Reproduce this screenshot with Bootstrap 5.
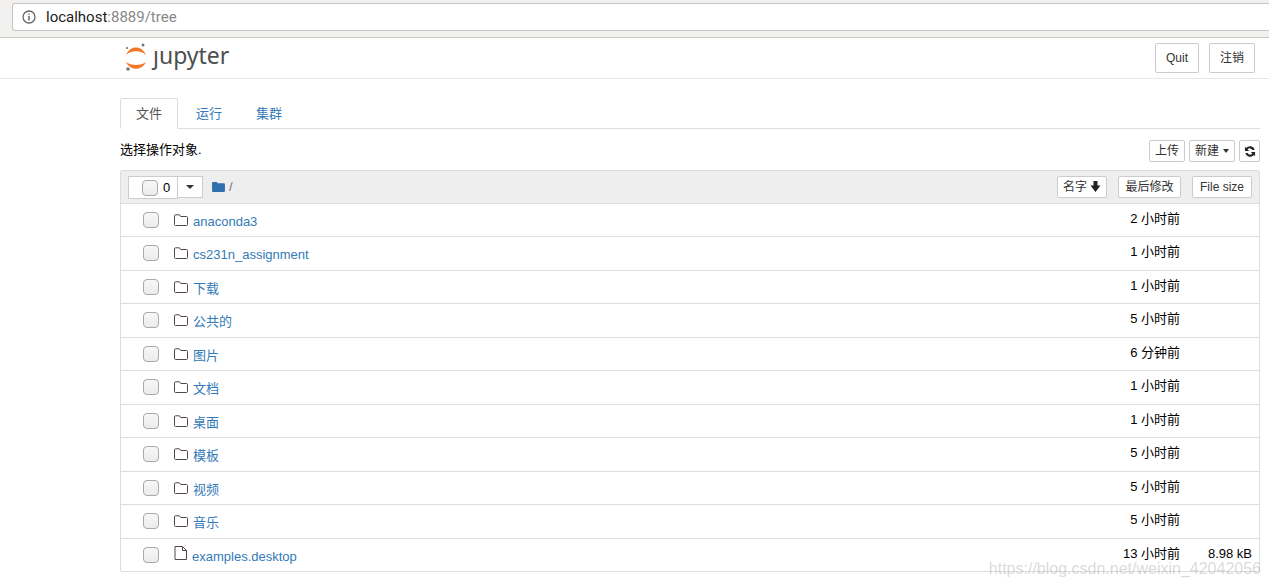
<!DOCTYPE html>
<html lang="en">
<head>
    <meta charset="UTF-8">
    <title>Home</title>
    <link href="https://cdn.jsdelivr.net/npm/bootstrap@5.3.0/dist/css/bootstrap.min.css" rel="stylesheet">
    <style>
        body { font-family: "Liberation Sans", "Noto Sans CJK SC", sans-serif; font-size: 13px; color: #000; overflow: hidden; }
        .chrome-bar { height: 38px; background: #f2f1f0; border-bottom: 1px solid #c9c7c4; padding: 3px 0 6px 12px; }
        .url-box { height: 28px; background: #fff; border: 1px solid #c6c6c6; border-right: 0; border-radius: 3px 0 0 3px; padding-left: 9px; gap: 10px; font-size: 15px; font-family: "Roboto", "Noto Sans", sans-serif; color: #888; }
        .url-box b { font-weight: 400; color: #222; }
        .head-bar { height: 41px; border-bottom: 1px solid #e7e7e7; padding: 0 14px 0 124px; }
        .logo-word { font-family: "Noto Sans", sans-serif; font-size: 23px; line-height: 28px; color: #4e4e4e; margin-left: 5px; margin-top: -6px; }
        .head-btns { gap: 10px; }
        .jp-btn { font-size: 12px; line-height: 18px; padding: 1px 5px; border: 1px solid #ccc; border-radius: 2px; background: #fff; color: #333; height: 22px; white-space: nowrap; }
        .jp-btn:hover { background: #e6e6e6; }
        .head-btn { height: 30px; padding: 5px 10px; }
        .new-btn { gap: 4px; }
        .new-btn .caret-tri { border-left-width: 3.5px; border-right-width: 3.5px; }
        .reload-btn { padding: 0 3.5px; }
        .sort-btn { gap: 3px; }
        .modified-btn { padding: 1px 6.5px; }
        .size-btn { padding: 1px 7px; }
        .page-main { padding: 19px 9px 0 120px; }
        .nav-tabs { border-color: #ddd; --bs-nav-tabs-border-radius: 2px; }
        .nav-tabs .nav-link { padding: 0 15px; line-height: 29px; height: 31px; color: #337ab7; margin-right: 2px; }
        .nav-tabs .nav-link.active { color: #555; border-color: #ddd #ddd #fff; }
        .toolbar-row { height: 41px; padding-top: 11px; }
        .pick-label { margin-top: 1px; line-height: 18px; }
        .list-box { border: 1px solid #ddd; border-radius: 2px; }
        .list-top { height: 32.6px; background: #eee; border-bottom: 1px solid #ddd; padding: 0 7px; }
        .file-row { height: 33.5px; border-bottom: 1px solid #ddd; padding: 0 7px 0 22px; }
        .file-row:last-child { border-bottom: 0; height: 32.4px; }
        .file-row a { color: #337ab7; text-decoration: none; margin-left: 5px; position: relative; top: 1.5px; }
        .row-icon { margin-left: 15px; width: 14px; height: 14px; fill: none; stroke: #54444f; stroke-width: 1; flex: none; }
        .file-icon { margin-top: -3px; }
        .file-row .file-name { margin-left: 4px; }
        .chk { appearance: none; width: 16px; height: 16px; margin: 0; border: 1px solid #a9a9a9; border-radius: 4px; background: linear-gradient(#f7f7f7, #ececec); flex: none; }
        .when { width: 110px; text-align: right; margin-left: auto; position: relative; top: -1.5px; }
        .size { width: 72px; text-align: right; position: relative; top: -1.5px; }
        .count-box { width: 50px; height: 23px; background: #fff; border: 1px solid #ccc; padding-left: 13px; gap: 5px; margin-top: 2px; }
        .count-caret { width: 25px; height: 22px; background: #fff; border: 1px solid #ccc; border-left: 0; }
        .caret-tri { width: 0; height: 0; border-left: 4px solid transparent; border-right: 4px solid transparent; border-top: 4px solid #333; }
        .crumb-folder { margin-left: 9px; }
        .sort-btns { gap: 11px; }
        .wm { position: absolute; right: 8px; bottom: 10px; font-size: 16px; line-height: 1; color: rgba(130,130,130,.3); }
    </style>
</head>
<body>
    <svg width="0" height="0" class="position-absolute">
        <symbol id="ic-folder" viewBox="0 0 14 14"><path d="M1.500 12.500h11a1 1 0 0 0 1-1v-7a1 1 0 0 0-1-1H6.700L5.500 1.800h-4a1 1 0 0 0-1 1v8.700a1 1 0 0 0 1 1z"/></symbol>
        <symbol id="ic-file" viewBox="0 0 14 14"><path d="M1 .5h7.500l4 4v9H1zM8.500 .5v4h4"/></symbol>
    </svg>

    <div class="chrome-bar">
        <div class="url-box d-flex align-items-center">
            <svg width="14" height="14" viewBox="0 0 14 14"><circle cx="7" cy="7" r="6" fill="none" stroke="#666" stroke-width="1.300"/><path d="M7 6v4.500M7 3.500v1.300" stroke="#666" stroke-width="1.500"/></svg>
            <span><b>localhost</b>:8889/tree</span>
        </div>
    </div>

    <div class="head-bar d-flex align-items-center">
        <svg width="24" height="30" viewBox="0 0 24 30">
            <path d="M2 12C6 2 18 2 22 12C17 7 7 7 2 12z" fill="#f37726"/>
            <path d="M2 19C6 28 18 28 22 19C17 23 7 23 2 19z" fill="#f37726"/>
            <circle cx="19" cy="2" r="1.500" fill="#767677"/>
            <circle cx="3" cy="5" r="1.100" fill="#767677"/>
            <circle cx="4" cy="26" r="1.800" fill="#767677"/>
        </svg>
        <span class="logo-word">ȷupyter</span>
        <div class="ms-auto d-flex head-btns">
            <button class="jp-btn head-btn">Quit</button>
            <button class="jp-btn head-btn">注销</button>
        </div>
    </div>

    <div class="page-main">
        <ul class="nav nav-tabs">
            <li class="nav-item"><a class="nav-link active" href="#">文件</a></li>
            <li class="nav-item"><a class="nav-link" href="#">运行</a></li>
            <li class="nav-item"><a class="nav-link" href="#">集群</a></li>
        </ul>

        <div class="toolbar-row d-flex align-items-start">
            <span class="pick-label">选择操作对象.</span>
            <div class="ms-auto d-flex gap-1">
                <button class="jp-btn">上传</button>
                <button class="jp-btn d-flex align-items-center new-btn">新建<span class="caret-tri"></span></button>
                <button class="jp-btn reload-btn d-flex align-items-center">
                    <svg width="12" height="13" viewBox="0 0 13 13" fill="#222"><path d="M11.500 5A5 5 0 0 0 2.500 2.800L1 1.300V6h4.700L3.900 4.200A3 3 0 0 1 9 5zM1.500 8A5 5 0 0 0 10.500 10.200L12 11.700V7H7.300l1.800 1.800A3 3 0 0 1 4 8z"/></svg>
                </button>
            </div>
        </div>

        <div class="list-box">
            <div class="list-top d-flex align-items-center">
                <div class="count-box d-flex align-items-center"><input type="checkbox" class="chk"><span>0</span></div>
                <div class="count-caret d-flex align-items-center justify-content-center"><span class="caret-tri"></span></div>
                <svg class="crumb-folder" width="13" height="11" viewBox="0 0 14 12" fill="#2f6fae"><path d="M1 1h4l1.200 1.500H13a1 1 0 0 1 1 1V11a1 1 0 0 1-1 1H1a1 1 0 0 1-1-1V2a1 1 0 0 1 1-1z"/></svg>
                <span class="ms-1 text-secondary">/</span>
                <div class="ms-auto d-flex sort-btns">
                    <button class="jp-btn d-flex align-items-center sort-btn">名字
                        <svg width="11" height="11" viewBox="0 0 11 11" fill="#222"><path d="M3.500 0h4v4.500h3L5.500 11 .5 4.500h3z"/></svg>
                    </button>
                    <button class="jp-btn modified-btn">最后修改</button>
                    <button class="jp-btn size-btn">File size</button>
                </div>
            </div>
            <div class="file-row d-flex align-items-center"><input type="checkbox" class="chk"><svg class="row-icon"><use href="#ic-folder"/></svg><a href="#">anaconda3</a><span class="when">2 小时前</span><span class="size"></span></div>
            <div class="file-row d-flex align-items-center"><input type="checkbox" class="chk"><svg class="row-icon"><use href="#ic-folder"/></svg><a href="#">cs231n_assignment</a><span class="when">1 小时前</span><span class="size"></span></div>
            <div class="file-row d-flex align-items-center"><input type="checkbox" class="chk"><svg class="row-icon"><use href="#ic-folder"/></svg><a href="#">下载</a><span class="when">1 小时前</span><span class="size"></span></div>
            <div class="file-row d-flex align-items-center"><input type="checkbox" class="chk"><svg class="row-icon"><use href="#ic-folder"/></svg><a href="#">公共的</a><span class="when">5 小时前</span><span class="size"></span></div>
            <div class="file-row d-flex align-items-center"><input type="checkbox" class="chk"><svg class="row-icon"><use href="#ic-folder"/></svg><a href="#">图片</a><span class="when">6 分钟前</span><span class="size"></span></div>
            <div class="file-row d-flex align-items-center"><input type="checkbox" class="chk"><svg class="row-icon"><use href="#ic-folder"/></svg><a href="#">文档</a><span class="when">1 小时前</span><span class="size"></span></div>
            <div class="file-row d-flex align-items-center"><input type="checkbox" class="chk"><svg class="row-icon"><use href="#ic-folder"/></svg><a href="#">桌面</a><span class="when">1 小时前</span><span class="size"></span></div>
            <div class="file-row d-flex align-items-center"><input type="checkbox" class="chk"><svg class="row-icon"><use href="#ic-folder"/></svg><a href="#">模板</a><span class="when">5 小时前</span><span class="size"></span></div>
            <div class="file-row d-flex align-items-center"><input type="checkbox" class="chk"><svg class="row-icon"><use href="#ic-folder"/></svg><a href="#">视频</a><span class="when">5 小时前</span><span class="size"></span></div>
            <div class="file-row d-flex align-items-center"><input type="checkbox" class="chk"><svg class="row-icon"><use href="#ic-folder"/></svg><a href="#">音乐</a><span class="when">5 小时前</span><span class="size"></span></div>
            <div class="file-row d-flex align-items-center"><input type="checkbox" class="chk"><svg class="row-icon file-icon"><use href="#ic-file"/></svg><a href="#" class="file-name">examples.desktop</a><span class="when">13 小时前</span><span class="size">8.98 kB</span></div>
        </div>
    </div>
    <div class="wm">https://blog.csdn.net/weixin_42042056</div>

    <script src="https://cdn.jsdelivr.net/npm/bootstrap@5.3.0/dist/js/bootstrap.bundle.min.js"></script>
</body>
</html>
